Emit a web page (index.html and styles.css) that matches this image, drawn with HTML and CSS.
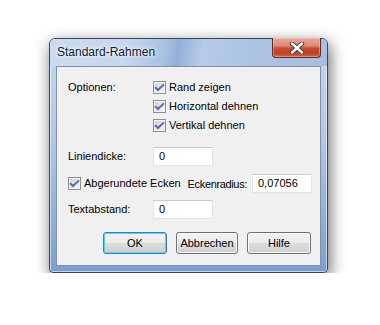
FILE: index.html
```html
<!DOCTYPE html>
<html lang="de">
<head>
  <meta charset="UTF-8">
  <title>Standard-Rahmen</title>
  <link rel="stylesheet" href="styles.css">
</head>
<body>
  <div class="desk">
    <div class="window">
      <div class="titlebar">
        <div class="title">Standard-Rahmen</div>
        <div class="close-btn">
          <svg width="16" height="12" viewBox="0 0 16 12">
            <path d="M3 1.5 L13 10.5 M13 1.5 L3 10.5" stroke="#4b3a36" stroke-width="4.4" stroke-linecap="round"/>
            <path d="M3 1.5 L13 10.5 M13 1.5 L3 10.5" stroke="#fff" stroke-width="2.4" stroke-linecap="round"/>
          </svg>
        </div>
      </div>
      <div class="client">
        <div class="options">
          <div class="label">Optionen:</div>
          <div class="check-list">
            <label class="check"><span class="box"></span>Rand zeigen</label>
            <label class="check"><span class="box"></span>Horizontal dehnen</label>
            <label class="check"><span class="box"></span>Vertikal dehnen</label>
          </div>
        </div>
        <div class="field row-width">
          <div class="label">Liniendicke:</div>
          <div class="textbox">0</div>
        </div>
        <div class="field row-round">
          <label class="check"><span class="box"></span>Abgerundete Ecken</label>
          <div class="radius-label">Eckenradius:</div>
          <div class="textbox">0,07056</div>
        </div>
        <div class="field row-spacing">
          <div class="label">Textabstand:</div>
          <div class="textbox">0</div>
        </div>
        <div class="buttons">
          <div class="button default btn-ok">OK</div>
          <div class="button btn-cancel">Abbrechen</div>
          <div class="button btn-help">Hilfe</div>
        </div>
      </div>
    </div>
  </div>
</body>
</html>
```

FILE: styles.css
```css
body {
  margin: 0;
  background: #fff;
  font-family: 'Liberation Sans', Arial, sans-serif;
  font-size: 11px;
  color: #000;
}
.desk {
  padding: 38px 0 0 49px;
}
.window {
  width: 279px;
  box-sizing: border-box;
  border: 1px solid #3b4656;
  border-radius: 6px 6px 4px 4px;
  background: linear-gradient(180deg, #c6d8ee 0%, #b3c9e6 40%, #8fadd9 80%, #7a9ed4 100%);
  box-shadow: 2px 5px 16px rgba(0, 0, 0, 0.6), inset 0 0 0 1px rgba(255, 255, 255, 0.55);
  padding: 0 6px 6px 6px;
}
.titlebar {
  display: flex;
  align-items: flex-start;
  height: 27px;
  margin: 0 -6px;
  padding: 0 6px 0 7px;
  border-radius: 5px 5px 0 0;
  background: linear-gradient(100deg, #cbdbef 0%, #c6d7ee 28%, #a7c0e2 42%, #93b0da 46%, #b6cbe8 55%, #adc4e4 70%, #a6bfe2 100%);
}
.title {
  font-size: 12px;
  line-height: 27px;
  color: #0e1a2a;
  text-shadow: 0 0 6px #fff, 0 0 3px #fff;
}
.close-btn {
  margin-left: auto;
  margin-top: -1px;
  width: 47px;
  height: 19px;
  border: 1px solid #5b2c22;
  border-top: none;
  border-radius: 0 0 4px 4px;
  background: linear-gradient(180deg, #e9a99a 0%, #dc8a75 40%, #c74c33 55%, #c0402a 80%, #d0674e 100%);
  box-shadow: inset 0 0 0 1px rgba(255, 200, 190, 0.45);
  display: flex;
  justify-content: center;
  align-items: center;
}
.client {
  border: 1px solid #7f90a8;
  background: #f0f0f0;
  padding: 14px 8px 11px 11px;
}
.options {
  display: flex;
}
.label {
  width: 85px;
  line-height: 13px;
}
.check-list {
  display: flex;
  flex-direction: column;
  gap: 6px;
}
.check {
  display: flex;
  align-items: center;
  height: 13px;
  line-height: 13px;
}
.box {
  width: 11px;
  height: 11px;
  border: 1px solid #8e8f8f;
  margin-right: 3px;
  background: linear-gradient(135deg, #d0d0d0 0%, #e8e8e8 60%, #f4f4f4 100%);
  box-shadow: inset 0 0 0 1px #f4f4f4;
  position: relative;
}
.box::after {
  content: "";
  position: absolute;
  left: 2px;
  top: 0;
  width: 3px;
  height: 7px;
  border: solid #5b70b8;
  border-width: 0 2px 2px 0;
  transform: translate(1px, 0) rotate(40deg) skewX(-8deg);
}
.field {
  display: flex;
  align-items: center;
  height: 19px;
}
.row-width {
  margin-top: 15px;
}
.row-round {
  margin-top: 8px;
}
.row-spacing {
  margin-top: 7px;
}
.textbox {
  width: 60px;
  height: 19px;
  box-sizing: border-box;
  background: #fff;
  border: 1px solid #e2e3ea;
  border-top-color: #c9ccd4;
  padding-left: 5px;
  line-height: 17px;
}
.radius-label {
  margin-left: auto;
  margin-right: 5px;
  letter-spacing: -0.35px;
}
.buttons {
  display: flex;
  justify-content: flex-end;
  gap: 9px;
  margin-top: 13px;
  padding-right: 1px;
}
.button {
  width: 64px;
  height: 22px;
  box-sizing: border-box;
  border: 1px solid #707070;
  border-radius: 3px;
  background: linear-gradient(180deg, #f2f2f2 0%, #ebebeb 50%, #dddddd 50%, #cfcfcf 100%);
  box-shadow: inset 0 0 0 1px #fcfcfc;
  text-align: center;
  line-height: 20px;
}
.button.default {
  border-color: #3c7fb1;
  box-shadow: inset 0 0 0 1px #48d8fb;
}
.btn-cancel {
  width: 62px;
}
```
